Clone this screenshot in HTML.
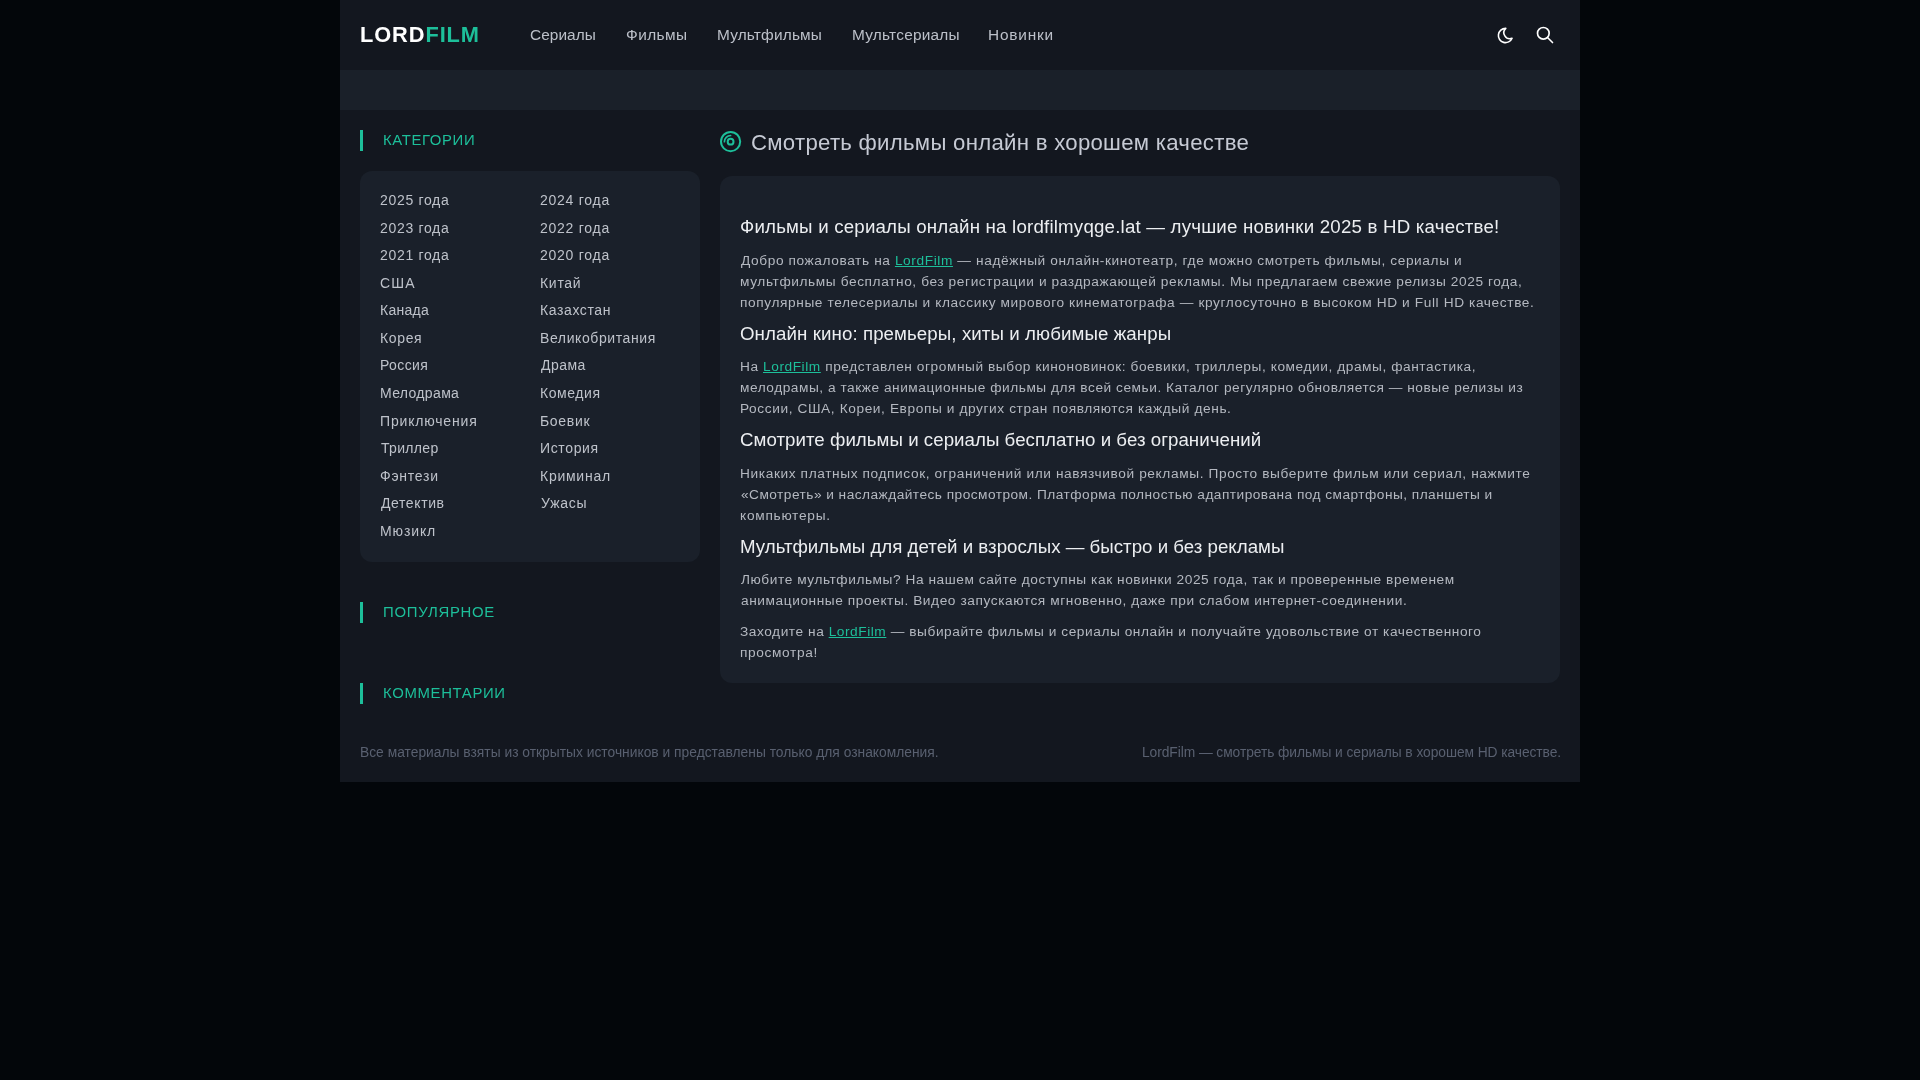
<!DOCTYPE html>
<html lang="ru">
<head>
<meta charset="utf-8">
<title>LordFilm</title>
<style>
*{margin:0;padding:0;box-sizing:border-box}
html,body{width:1920px;height:1080px;background:#03060a;overflow:hidden}
body{font-family:"Liberation Sans",sans-serif;position:relative}
.wrap{position:absolute;left:0;top:0;width:1920px;height:1080px}
.bgc{position:absolute;left:340px;top:0;width:1240px;height:782px;background:#13171f}
.bar{position:absolute;left:340px;top:70px;width:1240px;height:40px;background:#1a2029}
.card{position:absolute;background:#1a202a;border-radius:12px}
.acc{position:absolute;left:360px;width:3px;height:21px;background:#1dbf9a}
.ico{position:absolute}
.t{position:absolute;white-space:nowrap;will-change:transform}
.logo{font-size:21.8px;font-weight:700;line-height:24px;color:#fff}
.logo span{color:#1dbf9a}
.nav{font-size:15.4px;line-height:18px;color:#bcc0c9}
.sh{font-size:14.9px;line-height:18px;color:#1dbf9a}
.cat{font-size:14px;line-height:18px;color:#bec2ca}
.title{font-size:22.2px;line-height:26px;color:#c6cad4}
.h{font-size:18.7px;line-height:22px;color:#eceef1}
.p{font-size:13.7px;line-height:18px;color:#b4b8c0}
.p a{color:#1dbf9a;text-decoration:underline;text-underline-offset:1px;text-decoration-thickness:1px}
.ft{font-size:13.8px;line-height:18px;color:#596070}

</style>
</head>
<body>
<div class="wrap">
<div class="bgc"></div>
<div class="bar"></div>
<svg class="ico" style="left:1495.9px;top:26.2px" width="19" height="19" viewBox="0 0 24 24" fill="none" stroke="#fff" stroke-width="2" stroke-linecap="round" stroke-linejoin="round"><path d="M12 3c.132 0 .263 0 .393 0a7.5 7.5 0 0 0 7.92 12.446a9 9 0 1 1 -8.313 -12.454z"/></svg>
<svg class="ico" style="left:1535px;top:25.1px" width="20" height="20" viewBox="0 0 24 24" fill="none" stroke="#fff" stroke-width="2" stroke-linecap="round" stroke-linejoin="round"><circle cx="10" cy="10" r="7"/><path d="M21 21l-6 -6"/></svg>
<div class="acc" style="top:130px"></div>
<div class="card" style="left:360px;top:171px;width:340px;height:391px"></div>
<div class="acc" style="top:602px"></div>
<div class="acc" style="top:683px"></div>
<svg class="ico" style="left:719px;top:130px" width="23" height="23" viewBox="0 0 23 23" fill="none" stroke="#1dbf9a" stroke-width="2" stroke-linecap="round"><circle cx="11.6" cy="11.6" r="9.6"/><circle cx="11.6" cy="11.7" r="2.9"/><path stroke-width="1.7" d="M5.4 11.7A6.2 6.2 0 0 1 11.6 5.5"/></svg>
<div class="card" style="left:720px;top:176px;width:840px;height:507px"></div>
<div class="t logo" style="left:359.90px;top:23.00px;letter-spacing:0.914px">LORD<span>FILM</span></div>
<div class="t nav" style="left:530.00px;top:26.00px;letter-spacing:0.067px">Сериалы</div>
<div class="t nav" style="left:625.50px;top:26.00px;letter-spacing:0.440px">Фильмы</div>
<div class="t nav" style="left:716.50px;top:26.00px;letter-spacing:0.180px">Мультфильмы</div>
<div class="t nav" style="left:851.50px;top:26.00px;letter-spacing:0.236px">Мультсериалы</div>
<div class="t nav" style="left:988.20px;top:26.00px;letter-spacing:0.800px">Новинки</div>
<div class="t sh" style="left:383.00px;top:131.00px;letter-spacing:0.625px">КАТЕГОРИИ</div>
<div class="t sh" style="left:383.10px;top:603.00px;letter-spacing:0.733px">ПОПУЛЯРНОЕ</div>
<div class="t sh" style="left:383.10px;top:684.00px;letter-spacing:0.660px">КОММЕНТАРИИ</div>
<div class="t cat" style="left:380.10px;top:191.00px;letter-spacing:0.675px">2025 года</div>
<div class="t cat" style="left:380.10px;top:218.59px;letter-spacing:0.675px">2023 года</div>
<div class="t cat" style="left:380.10px;top:246.17px;letter-spacing:0.675px">2021 года</div>
<div class="t cat" style="left:380.10px;top:273.73px;letter-spacing:1.200px">США</div>
<div class="t cat" style="left:380.10px;top:301.31px;letter-spacing:0.280px">Канада</div>
<div class="t cat" style="left:380.10px;top:328.91px;letter-spacing:0.650px">Корея</div>
<div class="t cat" style="left:380.10px;top:356.48px;letter-spacing:0.400px">Россия</div>
<div class="t cat" style="left:380.10px;top:384.08px;letter-spacing:0.350px">Мелодрама</div>
<div class="t cat" style="left:380.10px;top:411.66px;letter-spacing:0.820px">Приключения</div>
<div class="t cat" style="left:381.10px;top:439.22px;letter-spacing:0.333px">Триллер</div>
<div class="t cat" style="left:380.10px;top:466.80px;letter-spacing:0.767px">Фэнтези</div>
<div class="t cat" style="left:381.10px;top:494.39px;letter-spacing:0.600px">Детектив</div>
<div class="t cat" style="left:380.10px;top:521.95px;letter-spacing:0.880px">Мюзикл</div>
<div class="t cat" style="left:539.50px;top:191.00px;letter-spacing:0.750px">2024 года</div>
<div class="t cat" style="left:539.50px;top:218.59px;letter-spacing:0.750px">2022 года</div>
<div class="t cat" style="left:539.50px;top:246.17px;letter-spacing:0.750px">2020 года</div>
<div class="t cat" style="left:539.50px;top:273.73px;letter-spacing:0.700px">Китай</div>
<div class="t cat" style="left:539.50px;top:301.31px;letter-spacing:0.600px">Казахстан</div>
<div class="t cat" style="left:539.50px;top:328.91px;letter-spacing:0.600px">Великобритания</div>
<div class="t cat" style="left:540.50px;top:356.48px;letter-spacing:0.450px">Драма</div>
<div class="t cat" style="left:539.50px;top:384.08px;letter-spacing:0.567px">Комедия</div>
<div class="t cat" style="left:539.50px;top:411.66px;letter-spacing:0.680px">Боевик</div>
<div class="t cat" style="left:539.50px;top:439.22px;letter-spacing:0.633px">История</div>
<div class="t cat" style="left:539.50px;top:466.80px;letter-spacing:0.743px">Криминал</div>
<div class="t cat" style="left:540.50px;top:494.39px;letter-spacing:0.750px">Ужасы</div>
<div class="t title" style="left:751.00px;top:130.00px;letter-spacing:0.275px">Смотреть фильмы онлайн в хорошем качестве</div>
<div class="t h" style="left:740.10px;top:216.00px;letter-spacing:0.197px">Фильмы и сериалы онлайн на lordfilmyqge.lat — лучшие новинки 2025 в HD качестве!</div>
<div class="t p" style="left:741.10px;top:252.00px;letter-spacing:0.600px">Добро пожаловать на <a>LordFilm</a> — надёжный онлайн-кинотеатр, где можно смотреть фильмы, сериалы и</div>
<div class="t p" style="left:740.10px;top:273.00px;letter-spacing:0.598px">мультфильмы бесплатно, без регистрации и раздражающей рекламы. Мы предлагаем свежие релизы 2025 года,</div>
<div class="t p" style="left:740.10px;top:294.00px;letter-spacing:0.606px">популярные телесериалы и классику мирового кинематографа — круглосуточно в высоком HD и Full HD качестве.</div>
<div class="t h" style="left:740.10px;top:323.00px;letter-spacing:0.086px">Онлайн кино: премьеры, хиты и любимые жанры</div>
<div class="t p" style="left:740.10px;top:358.00px;letter-spacing:0.569px">На <a>LordFilm</a> представлен огромный выбор киноновинок: боевики, триллеры, комедии, драмы, фантастика,</div>
<div class="t p" style="left:740.10px;top:379.00px;letter-spacing:0.535px">мелодрамы, а также анимационные фильмы для всей семьи. Каталог регулярно обновляется — новые релизы из</div>
<div class="t p" style="left:740.10px;top:400.00px;letter-spacing:0.597px">России, США, Кореи, Европы и других стран появляются каждый день.</div>
<div class="t h" style="left:740.10px;top:429.00px;letter-spacing:0.035px">Смотрите фильмы и сериалы бесплатно и без ограничений</div>
<div class="t p" style="left:740.10px;top:465.00px;letter-spacing:0.612px">Никаких платных подписок, ограничений или навязчивой рекламы. Просто выберите фильм или сериал, нажмите</div>
<div class="t p" style="left:741.10px;top:486.00px;letter-spacing:0.469px">«Смотреть» и наслаждайтесь просмотром. Платформа полностью адаптирована под смартфоны, планшеты и</div>
<div class="t p" style="left:740.10px;top:507.00px;letter-spacing:0.740px">компьютеры.</div>
<div class="t h" style="left:740.10px;top:536.00px;letter-spacing:0.007px">Мультфильмы для детей и взрослых — быстро и без рекламы</div>
<div class="t p" style="left:741.10px;top:571.00px;letter-spacing:0.557px">Любите мультфильмы? На нашем сайте доступны как новинки 2025 года, так и проверенные временем</div>
<div class="t p" style="left:741.10px;top:592.00px;letter-spacing:0.579px">анимационные проекты. Видео запускаются мгновенно, даже при слабом интернет-соединении.</div>
<div class="t p" style="left:740.10px;top:623.00px;letter-spacing:0.553px">Заходите на <a>LordFilm</a> — выбирайте фильмы и сериалы онлайн и получайте удовольствие от качественного</div>
<div class="t p" style="left:740.10px;top:644.00px;letter-spacing:0.644px">просмотра!</div>
<div class="t ft" style="left:360.10px;top:744.00px;letter-spacing:0.012px">Все материалы взяты из открытых источников и представлены только для ознакомления.</div>
<div class="t ft" style="left:1142.00px;top:744.00px;letter-spacing:-0.069px">LordFilm — смотреть фильмы и сериалы в хорошем HD качестве.</div>
</div>
</body>
</html>
